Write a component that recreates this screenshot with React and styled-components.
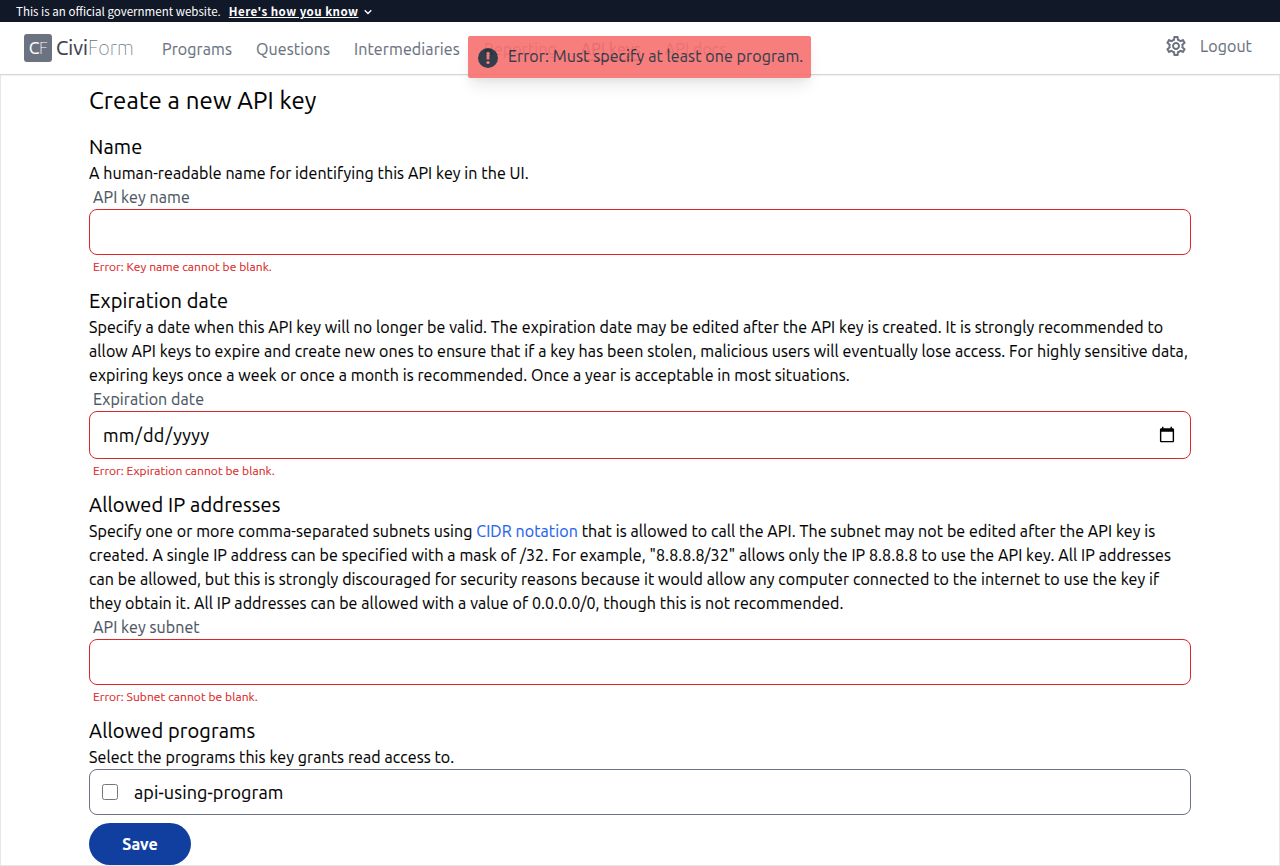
import React from "react";
import styled, { createGlobalStyle } from "styled-components";
import { MdOutlineSettings } from "react-icons/md";

const GlobalStyle = createGlobalStyle`
  *, *::before, *::after { box-sizing: border-box; }
  body {
    margin: 0;
    background: #fff;
    color: #000;
    font: 16px/24px Ubuntu, "Noto Sans", sans-serif;
    letter-spacing: 0.09px;
    -webkit-text-stroke: 0.12px currentColor;
  }
  h1, h2, p { margin: 0; font-weight: 400; }
`;

const Page = styled.div`
  display: flex;
  flex-direction: column;
  height: 866px;
  overflow: hidden;
  position: relative;
`;

const Banner = styled.div`
  display: flex;
  align-items: center;
  flex: none;
  height: 22px;
  padding-left: 16px;
  background: #111827;
  color: #fff;
  font: 11.56px/20px "Noto Sans CJK SC", sans-serif;
  letter-spacing: 0;
  white-space: nowrap;
  -webkit-text-stroke: 0;
`;

const BannerLink = styled.span`
  margin-left: 8px;
  font-weight: 700;
  letter-spacing: 0.44px;
  text-decoration: underline;
`;

const Chevron = styled.svg`
  margin: 2px 0 0 6px;
  width: 8px;
  height: 6px;
`;

const Header = styled.header`
  display: flex;
  align-items: center;
  flex: none;
  height: 52px;
  padding: 0 28px 0 24px;
  color: #6b7280;
  box-shadow: 0 1px 2px rgba(0, 0, 0, 0.12);
  position: relative;
`;

const LogoMark = styled.div`
  display: flex;
  align-items: center;
  justify-content: center;
  width: 28px;
  height: 28px;
  border-radius: 3px;
  background: #6b7280;
  color: #fff;
  font-size: 17.5px;
  letter-spacing: -0.4px;
  -webkit-text-stroke: 0.15px currentColor;
`;

const Thin = styled.span`
  font-weight: 100;
  -webkit-text-stroke: 0;
`;

const LogoText = styled.div`
  margin: 0 30px 0 4px;
  width: 76px;
  color: #374151;
  font-size: 20px;
  line-height: 28px;
  white-space: nowrap;
  -webkit-text-stroke: 0.2px currentColor;
`;

const LogoThin = styled(Thin)`
  color: #6b7280;
`;

const Nav = styled.nav`
  display: flex;
  gap: 24px;
  padding-top: 2px;
  letter-spacing: 0.11px;
`;

const NavItem = styled.a`
  height: 24px;
  white-space: nowrap;
  color: ${(p) => (p.$active ? "#374151" : "inherit")};
  box-shadow: ${(p) => (p.$active ? "0 -2px 0 #6b7280 inset" : "none")};
`;

const Account = styled.div`
  display: flex;
  align-items: center;
  gap: 12px;
  margin-left: auto;
  padding-bottom: 4px;
`;

const Toast = styled.div`
  position: absolute;
  top: 36px;
  left: 468px;
  display: flex;
  width: 343px;
  height: 42px;
  padding: 8px;
  border-radius: 2px;
  background: #f87171;
  color: #1f2937;
  opacity: 0.9;
  white-space: nowrap;
  box-shadow: 0 10px 15px -3px rgba(0, 0, 0, 0.1), 0 4px 6px -2px rgba(0, 0, 0, 0.05);
`;

const ToastIcon = styled.svg`
  flex: none;
  width: 24px;
  height: 24px;
  margin: 2px 8px 0 0;
`;

const Main = styled.main`
  flex: 1;
  padding: 10px 88px 0;
  border: 1px solid #e5e7eb;
`;

const Title = styled.h1`
  margin-bottom: 16px;
  font-size: 24px;
  line-height: 32px;
  letter-spacing: 0.15px;
`;

const Section = styled.section`
  margin-bottom: ${(p) => (p.$last ? 8 : 12)}px;
`;

const Heading = styled.h2`
  font-size: 20px;
  line-height: 28px;
  letter-spacing: 0.13px;
`;

const Link = styled.a`
  color: #2563eb;
`;

const Label = styled.label`
  display: block;
  padding-left: 4px;
  color: #4b5563;
`;

const Input = styled.input`
  display: block;
  width: 100%;
  height: ${(p) => (p.type === "date" ? 48 : 46)}px;
  padding: 8px 12px;
  border: 1px solid #dc2626;
  border-radius: 8px;
  background: #fff;
  color: #000;
  font: 18px/28px Ubuntu, "Noto Sans", sans-serif;
  letter-spacing: 0.12px;
  outline: none;
`;

const FieldError = styled.div`
  margin-top: 4px;
  padding-left: 4px;
  color: #dc2626;
  font-size: 12px;
  line-height: 16px;
  letter-spacing: 0.067px;
`;

const ProgramOption = styled.label`
  display: flex;
  align-items: center;
  height: 46px;
  padding: 0 12px;
  border: 1px solid #6b7280;
  border-radius: 8px;
  font-size: 18px;
  letter-spacing: 0.12px;
`;

const Checkbox = styled.input`
  width: 16px;
  height: 16px;
  margin: 0 16px 0 0;
`;

const SaveButton = styled.button`
  display: block;
  width: 102px;
  height: 42px;
  padding: 0;
  border: 0;
  border-radius: 21px;
  background: #113f9f;
  color: #fff;
  font: 700 16px/24px Ubuntu, "Noto Sans", sans-serif;
`;

export default function App() {
  return (
    <Page>
      <GlobalStyle />
      <Banner>
        <span>This is an official government website.</span>
        <BannerLink>Here's how you know</BannerLink>
        <Chevron viewBox="0 0 8 6" fill="none" stroke="#fff" strokeWidth="1.3">
          <path d="M.7 1.2 4 4.5l3.3-3.3" />
        </Chevron>
      </Banner>
      <Header>
        <LogoMark>C<Thin>F</Thin></LogoMark>
        <LogoText>Civi<LogoThin>Form</LogoThin></LogoText>
        <Nav>
          <NavItem>Programs</NavItem>
          <NavItem>Questions</NavItem>
          <NavItem>Intermediaries</NavItem>
          <NavItem>Reporting</NavItem>
          <NavItem $active>API keys</NavItem>
          <NavItem>API docs</NavItem>
        </Nav>
        <Account>
          <MdOutlineSettings size={24} />
          <span>Logout</span>
        </Account>
      </Header>
      <Main>
        <Title>Create a new API key</Title>
        <Section>
          <Heading>Name</Heading>
          <p>A human-readable name for identifying this API key in the UI.</p>
          <Label>API key name</Label>
          <Input type="text" />
          <FieldError>Error: Key name cannot be blank.</FieldError>
        </Section>
        <Section>
          <Heading>Expiration date</Heading>
          <p>
            Specify a date when this API key will no longer be valid. The expiration date may be
            edited after the API key is created. It is strongly recommended to allow API keys to
            expire and create new ones to ensure that if a key has been stolen, malicious users
            will eventually lose access. For highly sensitive data, expiring keys once a week or
            once a month is recommended. Once a year is acceptable in most situations.
          </p>
          <Label>Expiration date</Label>
          <Input type="date" />
          <FieldError>Error: Expiration cannot be blank.</FieldError>
        </Section>
        <Section>
          <Heading>Allowed IP addresses</Heading>
          <p>
            Specify one or more comma-separated subnets using <Link>CIDR notation</Link> that is
            allowed to call the API. The subnet may not be edited after the API key is created. A
            single IP address can be specified with a mask of /32. For example, "8.8.8.8/32"
            allows only the IP 8.8.8.8 to use the API key. All IP addresses can be allowed, but
            this is strongly discouraged for security reasons because it would allow any computer
            connected to the internet to use the key if{" "}
            <br />
            they obtain it. All IP addresses can be allowed with a value of 0.0.0.0/0, though this
            is not recommended.
          </p>
          <Label>API key subnet</Label>
          <Input type="text" />
          <FieldError>Error: Subnet cannot be blank.</FieldError>
        </Section>
        <Section $last>
          <Heading>Allowed programs</Heading>
          <p>Select the programs this key grants read access to.</p>
          <ProgramOption>
            <Checkbox type="checkbox" />
            api-using-program
          </ProgramOption>
        </Section>
        <SaveButton>Save</SaveButton>
      </Main>
      <Toast>
        <ToastIcon viewBox="0 0 24 24">
          <circle cx="12" cy="12" r="10" fill="#1f2937" />
          <path d="M10.4 6.300h3.200l-.3 7.200h-2.600z" fill="#f87171" />
          <circle cx="12" cy="16.500" r="1.600" fill="#f87171" />
        </ToastIcon>
        Error: Must specify at least one program.
      </Toast>
    </Page>
  );
}
